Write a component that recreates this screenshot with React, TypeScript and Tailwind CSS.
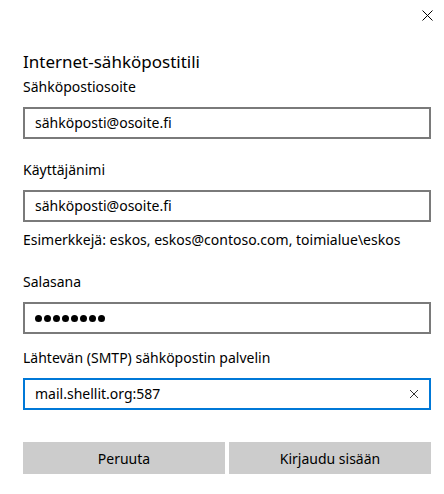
import React from "react";

function Field({ label, value, focused, password }: { label: string; value: string; focused?: boolean; password?: boolean }) {
  return (
    <div className="flex flex-col">
      <div className="text-[14px] leading-[20px] text-black">{label}</div>
      <div
        className={
          focused
            ? "mt-[10px] h-[32px] border-2 border-[#0078d7] flex items-center pl-[10px] pr-[8px]"
            : "mt-[10px] h-[32px] border-2 border-[#7a7a7a] flex items-center pl-[10px] pr-[8px]"
        }
      >
        {password ? (
          <div className="flex gap-[2px]">
            {Array.from({ length: 8 }).map((_, i) => (
              <span key={i} className="w-[7px] h-[7px] rounded-full bg-black" />
            ))}
          </div>
        ) : (
          <span className="text-[14px] leading-[20px] text-black flex-1">{value}</span>
        )}
        {focused && (
          <svg width="10" height="10" viewBox="0 0 10 10" className="mr-[2px]">
            <path d="M1 1 L9 9 M9 1 L1 9" stroke="#333" strokeWidth="1" />
          </svg>
        )}
      </div>
    </div>
  );
}

export default function App() {
  return (
    <div className="w-[444px] h-[494px] bg-white font-['Segoe_UI','Noto_Sans',sans-serif] text-black">
      <div className="flex justify-end pt-[10px] pr-[11px] h-[40px]">
        <svg width="11" height="11" viewBox="0 0 11 11">
          <path d="M0.5 0.5 L10.5 10.5 M10.5 0.5 L0.5 10.5" stroke="#000" strokeWidth="1" />
        </svg>
      </div>
      <div className="px-[23px] pr-[13px] flex flex-col">
        <div className="text-[17px] leading-[26px] mt-[9px]">Internet-sähköpostitili</div>
        <div className="mt-[2px]">
          <Field label="Sähköpostiosoite" value="sähköposti@osoite.fi" />
        </div>
        <div className="mt-[21px]">
          <Field label="Käyttäjänimi" value="sähköposti@osoite.fi" />
        </div>
        <div className="mt-[8px] text-[14px] leading-[20px]">Esimerkkejä: eskos, eskos@contoso.com, toimialue\eskos</div>
        <div className="mt-[22px]">
          <Field label="Salasana" value="" password />
        </div>
        <div className="mt-[14px]">
          <Field label="Lähtevän (SMTP) sähköpostin palvelin" value="mail.shellit.org:587" focused />
        </div>
        <div className="mt-[32px] flex gap-[4px]">
          <button className="flex-1 h-[32px] bg-[#cccccc] text-[14px]">Peruuta</button>
          <button className="flex-1 h-[32px] bg-[#cccccc] text-[14px]">Kirjaudu sisään</button>
        </div>
      </div>
    </div>
  );
}
